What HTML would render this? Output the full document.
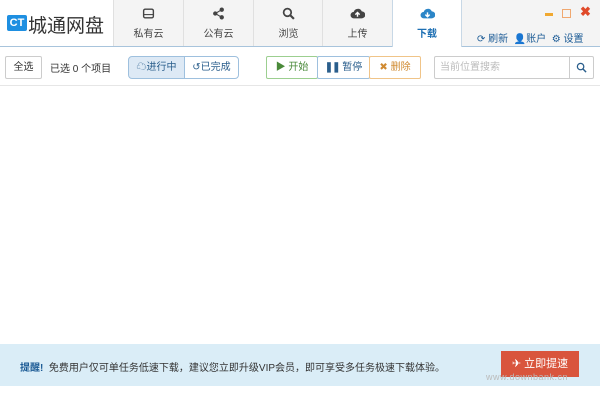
<!DOCTYPE html><html><head><meta charset="utf-8"><style>
*{margin:0;padding:0;box-sizing:border-box}
body{width:600px;height:400px;background:#fff;font-family:"Liberation Sans","Noto Sans CJK SC",sans-serif;font-size:10px;color:#333;position:relative;overflow:hidden}
.a{position:absolute}
.hdr{left:0;top:0;width:600px;height:47px;background:#f4f4f4;border-bottom:1px solid #a8c4dc}
.tab{top:0;height:46px;width:70px;border-left:1px solid #e0e0e0;text-align:center;color:#444;font-size:10px}
.tab svg{display:block;margin:7px auto 5px}
.btn{border:1px solid #ccc;height:23px;line-height:21px;text-align:center;font-size:10px;border-radius:2px;background:#fff}
</style></head><body>
<div class="a hdr"></div>
<div class="a" style="left:0;top:0;width:113px;height:46px;background:#fff"></div>
<div class="a" style="left:7px;top:15px;width:20px;height:16px;background:#1e8fe1;color:#fff;font-weight:bold;font-size:11px;line-height:16px;text-align:center;border-radius:2px">CT</div>
<div class="a" style="left:28px;top:11px;font-size:19px;color:#333">城通网盘</div>
<div class="a tab" style="left:113px"><svg width="13" height="13" viewBox="0 0 12 12"><rect x="1.5" y="2" width="9" height="8" rx="1.5" fill="none" stroke="#444" stroke-width="1.3"/><line x1="1.5" y1="7" x2="10.5" y2="7" stroke="#444"/></svg>私有云</div>
<div class="a tab" style="left:183px"><svg width="13" height="13" viewBox="0 0 12 12"><circle cx="9" cy="2.5" r="2" fill="#444"/><circle cx="3" cy="6" r="2" fill="#444"/><circle cx="9" cy="9.5" r="2" fill="#444"/><path d="M9 2.5L3 6L9 9.5" stroke="#444" fill="none"/></svg>公有云</div>
<div class="a tab" style="left:253px"><svg width="13" height="13" viewBox="0 0 12 12"><circle cx="5" cy="5" r="3.5" fill="none" stroke="#444" stroke-width="1.6"/><line x1="7.5" y1="7.5" x2="11" y2="11" stroke="#444" stroke-width="2"/></svg>浏览</div>
<div class="a tab" style="left:322px;width:70px"><svg width="15" height="13" viewBox="0 0 14 12"><path d="M3.5 10.5A3 3 0 0 1 3.5 4.5A4 4 0 0 1 11 4A3.2 3.2 0 0 1 11 10.5Z" fill="#444"/><path d="M7 9V5M5 7l2-2 2 2" stroke="#fff" stroke-width="1.3" fill="none"/></svg>上传</div>
<div class="a tab" style="left:392px;width:70px;height:47px;background:#fff;border-left:1px solid #c8d8e6;border-right:1px solid #c8d8e6;color:#1d6fb3;font-weight:bold"><svg width="15" height="13" viewBox="0 0 14 12"><path d="M3.5 10.5A3 3 0 0 1 3.5 4.5A4 4 0 0 1 11 4A3.2 3.2 0 0 1 11 10.5Z" fill="#2b85c7"/><path d="M7 5V9M5 7l2 2 2-2" stroke="#fff" stroke-width="1.3" fill="none"/></svg>下载</div>
<div class="a" style="left:545px;top:13px;width:8px;height:3px;background:#f0a830"></div>
<div class="a" style="left:562px;top:9px;width:9px;height:9px;border:1px solid #f0a870"></div>
<div class="a" style="left:580px;top:4px;color:#e04a2a;font-size:13px;font-weight:bold">✖</div>
<div class="a" style="left:477px;top:30px;font-size:10px;color:#1d5c96">⟳ 刷新 &nbsp;<span>👤</span>账户 &nbsp;⚙ 设置</div>
<div class="a btn" style="left:5px;top:56px;width:37px;color:#333">全选</div>
<div class="a" style="left:50px;top:60px;font-size:10px">已选 0 个项目</div>
<div class="a btn" style="left:128px;top:56px;width:57px;background:#dde9f5;border-color:#9ec0de;color:#2a5e8c;border-radius:4px 0 0 4px">☁进行中</div>
<div class="a btn" style="left:184px;top:56px;width:55px;border-color:#9ec0de;color:#2a5e8c;border-radius:0 4px 4px 0">↺已完成</div>
<div class="a btn" style="left:266px;top:56px;width:52px;border-color:#9ccf90;color:#4a8a3a">▶ 开始</div>
<div class="a btn" style="left:317px;top:56px;width:53px;border-color:#9ec0de;color:#2a5e8c"><b style="letter-spacing:-1px">❚❚</b> 暂停</div>
<div class="a btn" style="left:369px;top:56px;width:52px;border-color:#f0c488;color:#d08a30">✖ 删除</div>
<div class="a btn" style="left:434px;top:56px;width:136px;text-align:left;padding-left:5px;color:#bbb;border-radius:2px 0 0 2px">当前位置搜索</div>
<div class="a btn" style="left:569px;top:56px;width:25px;border-radius:0 2px 2px 0"><svg width="11" height="11" viewBox="0 0 12 12" style="margin-top:5px"><circle cx="5" cy="5" r="3.5" fill="none" stroke="#2a5e8c" stroke-width="1.4"/><line x1="7.5" y1="7.5" x2="11" y2="11" stroke="#2a5e8c" stroke-width="1.6"/></svg></div>
<div class="a" style="left:0;top:85px;width:600px;height:1px;background:#e6e6e6"></div>
<div class="a" style="left:0;top:344px;width:600px;height:42px;background:#daedf7"></div>
<div class="a" style="left:20px;top:359px;font-size:10px;color:#333"><b style="color:#1d5c96">提醒!</b>&nbsp; 免费用户仅可单任务低速下载，建议您立即升级VIP会员，即可享受多任务极速下载体验。</div>
<div class="a" style="left:501px;top:351px;width:78px;height:26px;background:#d9553d;color:#fff;font-size:11px;line-height:26px;text-align:center">✈ 立即提速</div>
<div class="a" style="left:486px;top:372px;font-size:9px;color:#bbb;letter-spacing:0.5px">www.downbank.cn</div>
</body></html>
